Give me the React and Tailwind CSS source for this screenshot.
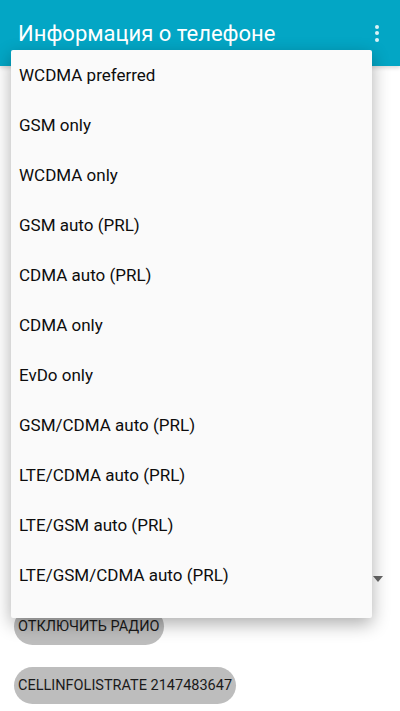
const NETWORK_MODES = [
  'WCDMA preferred',
  'GSM only',
  'WCDMA only',
  'GSM auto (PRL)',
  'CDMA auto (PRL)',
  'CDMA only',
  'EvDo only',
  'GSM/CDMA auto (PRL)',
  'LTE/CDMA auto (PRL)',
  'LTE/GSM auto (PRL)',
  'LTE/GSM/CDMA auto (PRL)',
]

function OverflowIcon() {
  return (
    <div className="flex flex-col items-center gap-[2.5px] px-2">
      <span className="block h-[4px] w-[4px] rounded-full bg-white/85" />
      <span className="block h-[4px] w-[4px] rounded-full bg-white/85" />
      <span className="block h-[4px] w-[4px] rounded-full bg-white/85" />
    </div>
  )
}

function ModeMenu() {
  return (
    <div className="absolute left-[11px] top-[50px] w-[361px] rounded-[2px] bg-[#fafafa] pb-[18px] shadow-[0_6px_18px_rgba(0,0,0,0.32)]">
      {NETWORK_MODES.map((mode) => (
        <div key={mode} className="flex h-[50px] items-center px-[8px] pt-[1px] text-[17px] text-[#0d0d0d]">
          {mode}
        </div>
      ))}
    </div>
  )
}

export default function App() {
  return (
    <div className="relative h-[711px] w-[400px] overflow-hidden bg-white font-['Roboto','Noto_Sans',sans-serif]">
      <header className="flex h-[66px] items-center justify-between bg-[#03a6c5] pl-[18px] pr-[13px] shadow-[0_2px_4px_rgba(0,0,0,0.15)]">
        <h1 className="text-[22px] font-normal text-white">Информация о телефоне</h1>
        <OverflowIcon />
      </header>

      <div className="flex flex-col px-[14px]">
        <div className="mt-[498px] flex h-[30px] items-center justify-end pr-[3px]">
          <span className="h-0 w-0 border-x-[5px] border-t-[6px] border-x-transparent border-t-[#666]" />
        </div>
        <div className="mt-[14px] flex flex-col items-start gap-[22px]">
          <button type="button" className="h-[37px] rounded-full bg-[#bdbdbd] px-[4px] text-[14.5px] text-[#1a1a1a]">
            ОТКЛЮЧИТЬ РАДИО
          </button>
          <button type="button" className="h-[37px] rounded-full bg-[#bdbdbd] px-[4px] text-[14.5px] text-[#1a1a1a]">
            CELLINFOLISTRATE 2147483647
          </button>
        </div>
      </div>

      <ModeMenu />
    </div>
  )
}
